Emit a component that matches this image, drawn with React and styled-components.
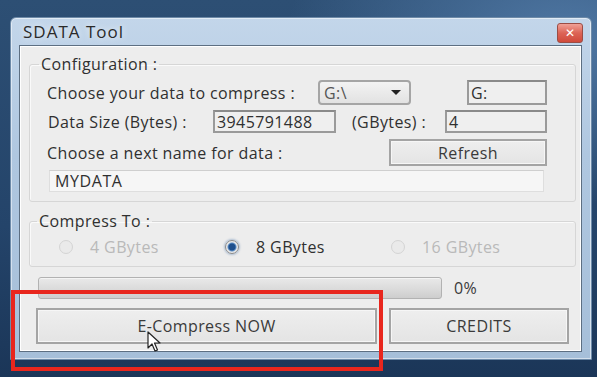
import React from "react";
import styled, { createGlobalStyle } from "styled-components";

const Global = createGlobalStyle`
  html, body { margin: 0; padding: 0; background: #ffffff; }
  body { width: 600px; height: 382px; overflow: hidden; font-family: "Open Sans", "Noto Sans", sans-serif; }
  * { box-sizing: border-box; }
`;

const Desktop = styled.div`
  position: relative;
  width: 597px;
  height: 377px;
  padding: 17px 0 0 10px;
  background: radial-gradient(ellipse at 95% 10%, #4f77a3 0%, rgba(79,119,163,0) 35%),
    linear-gradient(180deg, #2d4f74 0%, #24446a 60%, #1b3658 100%);
`;

const Window = styled.div`
  width: 582px;
  height: 343px;
  display: flex;
  flex-direction: column;
  padding: 0 9px 7px 8px;
  border: 1px solid #6d8aa8;
  border-radius: 6px 6px 0 0;
  background: linear-gradient(180deg, #c3d6ea 0%, #afc7e0 40%, #a6bfd9 100%);
  box-shadow: inset 0 0 0 1px rgba(255,255,255,0.5);
`;

const TitleBar = styled.div`
  height: 27px;
  display: flex;
  align-items: center;
  justify-content: space-between;
  padding-left: 4px;
`;

const Title = styled.span`
  font-size: 17px;
  color: #2a2a2a;
  letter-spacing: 1px;
  text-shadow: 0 0 6px rgba(255,255,255,0.9);
  margin-top: -1px;
`;

const CloseBtn = styled.div`
  width: 26px;
  height: 20px;
  margin-right: -1px;
  margin-top: 2px;
  border-radius: 3px;
  border: 1px solid #9b4d45;
  background: linear-gradient(180deg, #f0a197 0%, #dc6456 50%, #d04a3b 100%);
  display: flex;
  align-items: center;
  justify-content: center;
  color: #fff;
  font-size: 12px;
  font-weight: bold;
  font-family: "DejaVu Sans", sans-serif;
  line-height: 1;
`;

const Client = styled.div`
  flex: 1;
  display: flex;
  flex-direction: column;
  background: #ededed;
  border: 1px solid #5d6f82;
  box-shadow: inset 0 0 0 1px #ffffff;
  color: #303030;
  font-size: 16px;
  letter-spacing: 0.4px;
`;

const Group = styled.fieldset`
  margin: ${(p) => p.$mt}px 5px 0 9px;
  padding: 0 0 ${(p) => p.$pb}px 17px;
  min-width: 0;
  border: 1px solid #d6d6d6;
  border-radius: 3px;
  box-shadow: inset 1px 1px 0 #fafafa;
`;

const Legend = styled.legend`
  margin-left: ${(p) => p.$ml}px;
  padding: 0 2px;
  height: 18px;
  line-height: 18px;
  color: #303030;
`;

const Row = styled.div`
  display: flex;
  align-items: center;
  height: ${(p) => p.$h}px;
  margin-top: ${(p) => p.$mt}px;
`;

const Label = styled.span`
  width: ${(p) => p.$w}px;
  margin-left: ${(p) => p.$ml || 0}px;
  white-space: nowrap;
  flex-shrink: 0;
`;

const TextBox = styled.div`
  width: ${(p) => p.$w}px;
  height: 100%;
  margin-left: ${(p) => p.$ml || 0}px;
  border: 2px solid #9a9a9a;
  border-top-color: #8a8a8a;
  background: #efefef;
  padding-left: 2px;
  display: flex;
  align-items: center;
  flex-shrink: 0;
  overflow: hidden;
  white-space: nowrap;
`;

const Combo = styled.div`
  width: 93px;
  height: 100%;
  border: 2px solid #a5a5a5;
  border-radius: 4px;
  background: linear-gradient(180deg, #f3f3f3, #e2e2e2);
  display: flex;
  align-items: center;
  justify-content: space-between;
  padding: 0 8px 0 4px;
  color: #555;
  flex-shrink: 0;
`;

const Arrow = styled.span`
  width: 0;
  height: 0;
  border-left: 5px solid transparent;
  border-right: 5px solid transparent;
  border-top: 5px solid #222;
`;

const Spacer = styled.span`
  width: ${(p) => p.$w}px;
  flex-shrink: 0;
`;

const Button = styled.div`
  width: ${(p) => p.$w}px;
  height: 100%;
  margin-left: ${(p) => p.$ml || 0}px;
  border: 2px solid #a4a4a4;
  background: linear-gradient(180deg, #eeeeee, #e4e4e4);
  box-shadow: inset 0 0 0 1px #f6f6f6;
  display: flex;
  align-items: center;
  justify-content: center;
  color: #3a3a3a;
  flex-shrink: 0;
`;

const NameBox = styled.div`
  width: 495px;
  height: 100%;
  margin-left: 2px;
  border: 1px solid #dedede;
  border-top-color: #cfcfcf;
  background: #f6f6f6;
  padding-left: 5px;
  display: flex;
  align-items: center;
  letter-spacing: 0.6px;
`;

const RadioItem = styled.div`
  width: 166px;
  display: flex;
  align-items: center;
  gap: 17px;
  color: ${(p) => (p.$disabled ? "#b9b9b9" : "#303030")};
  flex-shrink: 0;
`;

const RadioCircle = styled.span`
  width: 14px;
  height: 14px;
  border-radius: 50%;
  border: 1px solid ${(p) => (p.$disabled ? "#d4d4d4" : "#8b8b8b")};
  background: ${(p) =>
    p.$checked
      ? "radial-gradient(circle, #1f4f8c 0 3px, #5d8fc7 4px, #e9e9e9 5px)"
      : p.$disabled
      ? "#eaeaea"
      : "#f4f4f4"};
  box-shadow: ${(p) => (p.$checked ? "0 0 2px 1px rgba(80,120,170,0.4)" : "none")};
`;

const Progress = styled.div`
  width: 404px;
  height: 100%;
  margin-left: 18px;
  border: 1px solid #b2b2b2;
  border-radius: 3px;
  background: linear-gradient(180deg, #e9e9e9 0%, #dcdcdc 50%, #cdcdcd 100%);
  box-shadow: inset 0 1px 0 #f4f4f4;
`;

const Percent = styled.span`
  margin-left: 12px;
  color: #3a3a3a;
`;

const Highlight = styled.div`
  position: absolute;
  left: 11px;
  top: 290px;
  width: 372px;
  height: 81px;
  border: 4px solid #e8261d;
  pointer-events: none;
`;

const Cursor = styled.svg`
  position: absolute;
  left: 147px;
  top: 331px;
  pointer-events: none;
`;

export default function App() {
  return (
    <>
      <Global />
      <Desktop>
        <Window>
          <TitleBar>
            <Title>SDATA Tool</Title>
            <CloseBtn>✕</CloseBtn>
          </TitleBar>
          <Client>
            <Group $mt={9} $pb={9}>
              <Legend $ml={-8}>Configuration :</Legend>
              <Row $h={25} $mt={7}>
                <Label $w={271}>Choose your data to compress :</Label>
                <Combo>
                  <span>G:\</span>
                  <Arrow />
                </Combo>
                <Spacer $w={56} />
                <TextBox $w={80}>G:</TextBox>
              </Row>
              <Row $h={23} $mt={5}>
                <Label $w={165} $ml={1}>Data Size (Bytes) :</Label>
                <TextBox $w={123}>3945791488</TextBox>
                <Label $w={93} $ml={16}>(GBytes) :</Label>
                <TextBox $w={102}>4</TextBox>
              </Row>
              <Row $h={27} $mt={6}>
                <Label $w={342}>Choose a next name for data :</Label>
                <Button $w={158}>Refresh</Button>
              </Row>
              <Row $h={22} $mt={4}>
                <NameBox>MYDATA</NameBox>
              </Row>
            </Group>
            <Group $mt={10} $pb={10}>
              <Legend $ml={-10}>Compress To :</Legend>
              <Row $h={18} $mt={8}>
                <Spacer $w={12} />
                <RadioItem $disabled>
                  <RadioCircle $disabled />
                  4 GBytes
                </RadioItem>
                <RadioItem>
                  <RadioCircle $checked />
                  8 GBytes
                </RadioItem>
                <RadioItem $disabled>
                  <RadioCircle $disabled />
                  16 GBytes
                </RadioItem>
              </Row>
            </Group>
            <Row $h={22} $mt={10}>
              <Progress />
              <Percent>0%</Percent>
            </Row>
            <Row $h={36} $mt={9}>
              <Button $w={341} $ml={16}>E-Compress NOW</Button>
              <Button $w={180} $ml={12}>CREDITS</Button>
            </Row>
          </Client>
        </Window>
        <Highlight />
        <Cursor width="14" height="22" viewBox="0 0 14 22">
          <path d="M1 1 L1 17 L5 13 L8 20 L10.5 19 L7.5 12 L13 12 Z" fill="#ffffff" stroke="#222" strokeWidth="1.2" strokeLinejoin="round" />
        </Cursor>
      </Desktop>
    </>
  );
}
